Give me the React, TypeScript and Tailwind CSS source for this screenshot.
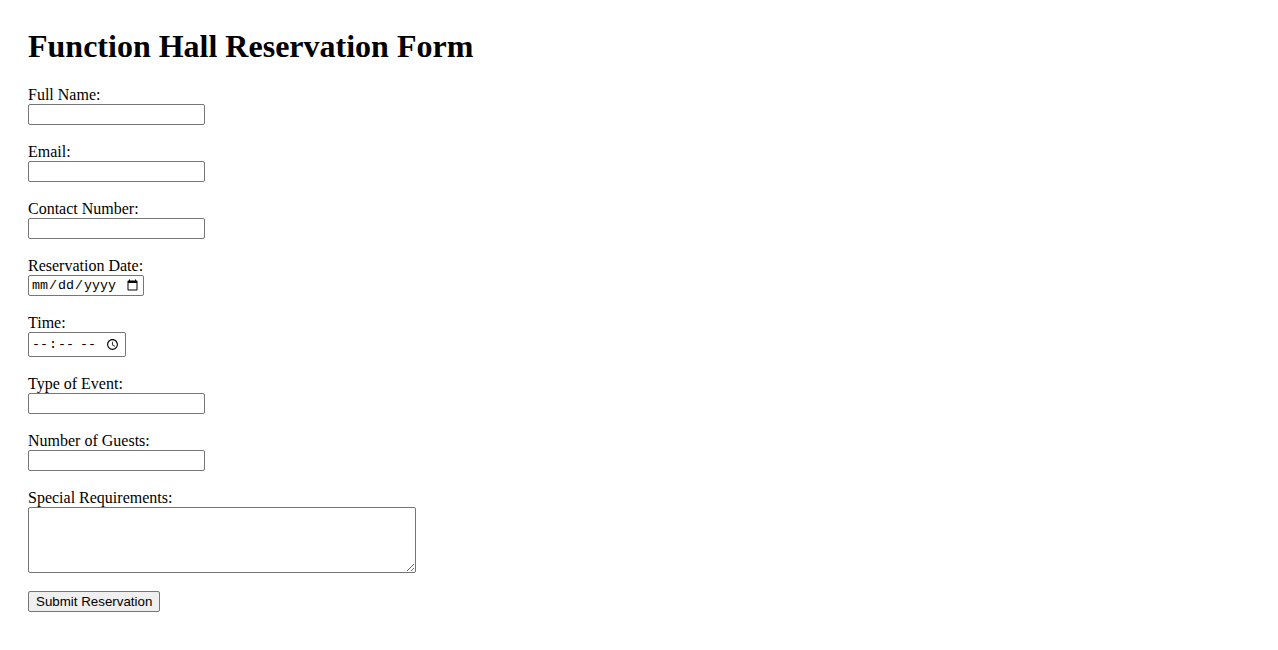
import React from 'react';

const serif = "font-['Liberation_Serif','Times_New_Roman',serif]";
const control =
  "block border border-[#767676] rounded-[2px] bg-white text-[13.33px] text-black";
const sans = "font-['Liberation_Sans',Arial,sans-serif]";
const mono = "font-['Liberation_Mono','Courier_New',monospace]";

type Field = { label: string; type: string; width: string; height: string; font: string };

const fields: Field[] = [
  { label: 'Full Name:', type: 'text', width: 'w-[177px]', height: 'h-[21px]', font: sans },
  { label: 'Email:', type: 'email', width: 'w-[177px]', height: 'h-[21px]', font: sans },
  { label: 'Contact Number:', type: 'tel', width: 'w-[177px]', height: 'h-[21px]', font: sans },
  { label: 'Reservation Date:', type: 'date', width: 'w-[116px]', height: 'h-[21px]', font: mono },
  { label: 'Time:', type: 'time', width: 'w-[98px]', height: 'h-[25px]', font: mono },
  { label: 'Type of Event:', type: 'text', width: 'w-[177px]', height: 'h-[21px]', font: sans },
  { label: 'Number of Guests:', type: 'number', width: 'w-[177px]', height: 'h-[21px]', font: sans },
];

const App: React.FC = () => {
  return (
    <div className={`min-h-[650px] bg-white text-black px-[28px] pt-[28px] ${serif}`}>
      <h1 className="text-[32px] font-bold leading-[normal] mb-[21px]">
        Function Hall Reservation Form
      </h1>

      <form className="flex flex-col items-start" onSubmit={(e) => e.preventDefault()}>
        {fields.map((f) => (
          <div key={f.label} className="mb-[18px]">
            <label className="block text-[16px] leading-[normal]">{f.label}</label>
            <input
              type={f.type}
              className={`${control} ${f.font} ${f.width} ${f.height} px-[2px] py-[1px]`}
            />
          </div>
        ))}

        <div className="mb-[18px]">
          <label className="block text-[16px] leading-[normal]">Special Requirements:</label>
          <textarea className={`${control} ${mono} w-[388px] h-[66px] px-[2px] py-[2px] resize`} />
        </div>

        <button
          type="submit"
          className={`h-[21px] px-[7px] border border-[#767676] rounded-[2px] bg-[#efefef] text-[13.33px] leading-none ${sans} text-black`}
        >
          Submit Reservation
        </button>
      </form>
    </div>
  );
};

export default App;
